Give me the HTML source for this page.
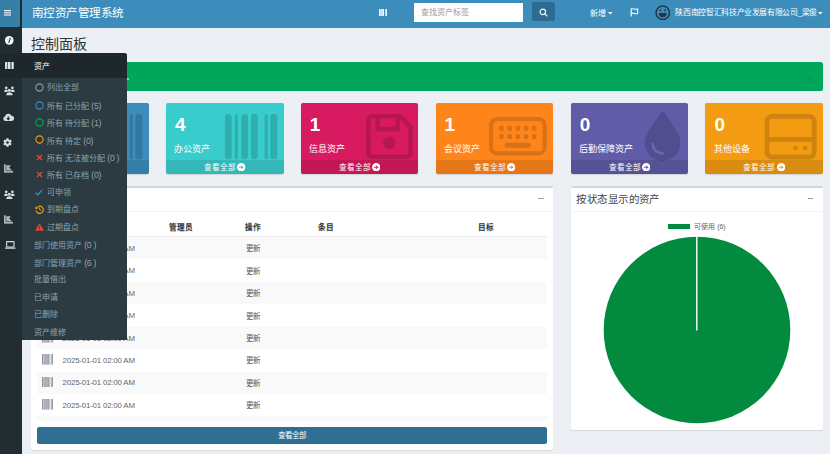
<!DOCTYPE html>
<html lang="zh-CN"><head><meta charset="utf-8">
<style>
*{box-sizing:border-box;margin:0;padding:0}
html,body{width:830px;height:454px;overflow:hidden;background:#ecf0f5;font-family:"Liberation Sans",sans-serif;position:relative}
.a{position:absolute}
#hdr{left:22px;top:0;width:808px;height:27.5px;background:#3c8dbc}
#side{left:0;top:0;width:22px;height:454px;background:#222d32}
#tog{left:0;top:0;width:19.8px;height:27px;background:#367fa9;border-bottom-right-radius:2px}
.w{color:#fff}
.box{top:103.2px;width:117.6px;height:71.3px;box-shadow:0 .5px 1px rgba(0,0,0,.12);border-radius:2px;color:#fff;overflow:hidden}
.box .num{position:absolute;left:9px;top:10.3px;font-weight:bold;font-size:19px;line-height:24px}
.box .lbl{position:absolute;left:8.4px;top:39.6px;font-size:9px;line-height:12px;white-space:nowrap}
.box .ft{position:absolute;left:0;right:0;bottom:0;height:14.4px;background:rgba(0,0,0,.1);text-align:center;font-size:7.6px;line-height:15.9px}
.box svg.ic{position:absolute}
.panel{background:#fff;border-top:2.5px solid #d2d6de;border-radius:2px;box-shadow:0 1px 1px rgba(0,0,0,.1)}
.row{left:37px;width:510.4px;height:22.4px}
.row.s{background:#f9f9f9}
.fly{left:22px;top:52.5px;width:104.6px;height:287.2px;background:#2c3b41;border-top-right-radius:3px}
.fh{left:22px;top:52.5px;width:104.6px;height:25.2px;background:#1e282c;border-top-right-radius:3px}
.it{position:absolute;left:34px;font-size:8px;line-height:12.5px;color:#8aa4af;white-space:nowrap}
.it.ic{left:46.8px}
.p{font-size:8.8px;letter-spacing:-0.3px}
</style></head><body>

<div id="side" class="a"></div>
<div id="tog" class="a"></div>
<div id="hdr" class="a"></div>
<!-- hamburger -->
<svg class="a" style="left:3.7px;top:10.3px" width="7.6" height="5.6" viewBox="0 0 7.6 5.6"><rect x="0" y="0" width="7.5" height="1.15" fill="#f4f8fb"/><rect x="0" y="2.2" width="7.5" height="1.15" fill="#f4f8fb"/><rect x="0" y="4.4" width="7.5" height="1.15" fill="#f4f8fb"/></svg>
<div class="a w" style="left:31.5px;top:4px;font-size:11.6px;letter-spacing:-0.45px;line-height:18px;white-space:nowrap">南控资产管理系统</div>
<!-- header barcode -->
<svg class="a" style="left:378.9px;top:9px" width="8.3" height="7" viewBox="0 0 8.3 7"><rect x="0" y="0" width="1.6" height="7" fill="#f0fbfb"/><rect x="1.6" y="0" width="1.7" height="7" fill="#e4dcf4"/><rect x="3.3" y="0" width="1.7" height="7" fill="#f0faf4"/><rect x="6.2" y="0" width="2" height="7" fill="#ececf6"/></svg>
<div class="a" style="left:413.5px;top:2.6px;width:109px;height:19.2px;background:#fff"></div>
<div class="a" style="left:421px;top:7.1px;font-size:8px;line-height:11px;color:#999;white-space:nowrap">查找资产标签</div>
<div class="a" style="left:532px;top:2.1px;width:23.1px;height:19.4px;background:#2d6b91;border-radius:2px"></div>
<svg class="a" style="left:538.8px;top:7.8px" width="9" height="9" viewBox="0 0 9 9"><circle cx="3.8" cy="3.8" r="2.75" fill="none" stroke="#eef4f8" stroke-width="1.15"/><line x1="5.8" y1="5.8" x2="7.9" y2="7.9" stroke="#eef4f8" stroke-width="1.3" stroke-linecap="round"/></svg>
<div class="a w" style="left:589.5px;top:7.6px;font-size:8px;line-height:11px;white-space:nowrap">新增</div>
<svg class="a" style="left:608px;top:11.8px" width="5" height="3" viewBox="0 0 5 3"><path d="M0 0H4.6L2.3 2.6Z" fill="#fff"/></svg>
<svg class="a" style="left:629.5px;top:8.3px" width="10" height="9.5" viewBox="0 0 10 9.5"><path d="M1.2 0.5V8.5" fill="none" stroke="#fff" stroke-width="1.1"/><path d="M1.2 1.1Q2.9 0.3 4.4 1T7.6 1V5.5Q6 6.2 4.4 5.5T1.2 5.5" fill="none" stroke="#f4f6fb" stroke-width="1.05"/></svg>
<svg class="a" style="left:655px;top:4.8px" width="15.5" height="15.5" viewBox="0 0 16 16"><circle cx="8" cy="8" r="6.9" fill="none" stroke="#263545" stroke-width="1.5"/><ellipse cx="5.6" cy="5.6" rx="0.9" ry="1.2" fill="#263545"/><ellipse cx="10.4" cy="5.6" rx="0.9" ry="1.2" fill="#263545"/><path d="M3.8 8.2H12.2C12.2 11 10.3 12.6 8 12.6C5.7 12.6 3.8 11 3.8 8.2Z" fill="#263545"/></svg>
<div class="a w" style="left:675.4px;top:7px;font-size:7.9px;letter-spacing:-0.36px;line-height:11px;white-space:nowrap">陕西南控智汇科技产业发展有限公司_梁俊</div>
<svg class="a" style="left:818px;top:11.8px" width="5" height="3" viewBox="0 0 5 3"><path d="M0 0H4.6L2.3 2.6Z" fill="#fff"/></svg>

<div class="a" style="left:31px;top:33.6px;font-size:14px;line-height:20px;color:#333;white-space:nowrap">控制面板</div>

<div class="a" style="left:31px;top:62.2px;width:792px;height:29.3px;background:#00a65a;border-radius:2.5px"></div>
<svg class="a" style="left:806.5px;top:76.3px" width="6" height="6" viewBox="0 0 6 6"><path d="M0.4 0.4L5.6 5.6M5.6 0.4L0.4 5.6" stroke="#0b8a50" stroke-width="0.95"/></svg>
<div class="a" style="left:126.8px;top:77.5px;width:2.5px;height:2.5px;background:#a8e6c6;border-radius:1px"></div>
<div class="a box" style="left:31.1px;background:#3c8dbc"><svg class="ic" style="left:59.2px;top:10.5px" width="53" height="46" viewBox="0 0 53 46"><g fill="#000" opacity=".15"><rect x="0" y="0" width="6.7" height="45.3" rx="3"/><rect x="9.9" y="0" width="2.9" height="45.3" rx="1.4"/><rect x="16.4" y="0" width="6.6" height="45.3" rx="3"/><rect x="26.1" y="0" width="6.6" height="45.3" rx="3"/><rect x="39.6" y="0" width="3.2" height="45.3" rx="1.5"/><rect x="45.3" y="0" width="7" height="45.3" rx="3"/></g></svg><div class="num">0</div><div class="lbl">资产</div><div class="ft">查看全部 <svg style="vertical-align:-1.3px;margin-left:-1px" width="8.4" height="8.4" viewBox="0 0 8.4 8.4"><circle cx="4.2" cy="4.2" r="4.15" fill="#fff"/><path d="M1.9 4.2H4.6" stroke="#3c8dbc" stroke-width="1.1"/><path d="M4.1 2.2L6.6 4.2L4.1 6.2Z" fill="#3c8dbc"/></svg></div></div>
<div class="a box" style="left:166.1px;background:#39cccc"><svg class="ic" style="left:59.2px;top:10.5px" width="53" height="46" viewBox="0 0 53 46"><g fill="#000" opacity=".15"><rect x="0" y="0" width="6.7" height="45.3" rx="3"/><rect x="9.9" y="0" width="2.9" height="45.3" rx="1.4"/><rect x="16.4" y="0" width="6.6" height="45.3" rx="3"/><rect x="26.1" y="0" width="6.6" height="45.3" rx="3"/><rect x="39.6" y="0" width="3.2" height="45.3" rx="1.5"/><rect x="45.3" y="0" width="7" height="45.3" rx="3"/></g></svg><div class="num">4</div><div class="lbl">办公资产</div><div class="ft">查看全部 <svg style="vertical-align:-1.3px;margin-left:-1px" width="8.4" height="8.4" viewBox="0 0 8.4 8.4"><circle cx="4.2" cy="4.2" r="4.15" fill="#fff"/><path d="M1.9 4.2H4.6" stroke="#39cccc" stroke-width="1.1"/><path d="M4.1 2.2L6.6 4.2L4.1 6.2Z" fill="#39cccc"/></svg></div></div>
<div class="a box" style="left:300.8px;background:#d81b60"><svg class="ic" style="left:65.6px;top:10.7px" width="47" height="45" viewBox="0 0 47 45"><g opacity=".15"><g fill="none" stroke="#000" stroke-width="4.6"><path d="M6.5 2.3H34L44.7 13V38.5A4 4 0 0 1 40.5 42.7H6.5A4.2 4.2 0 0 1 2.3 38.5V6.5A4.2 4.2 0 0 1 6.5 2.3Z"/><path d="M11.8 2.3V15.2H31.6V2.3"/></g><circle cx="23.3" cy="28.8" r="6.3" fill="#000"/></g></svg><div class="num">1</div><div class="lbl">信息资产</div><div class="ft">查看全部 <svg style="vertical-align:-1.3px;margin-left:-1px" width="8.4" height="8.4" viewBox="0 0 8.4 8.4"><circle cx="4.2" cy="4.2" r="4.15" fill="#fff"/><path d="M1.9 4.2H4.6" stroke="#d81b60" stroke-width="1.1"/><path d="M4.1 2.2L6.6 4.2L4.1 6.2Z" fill="#d81b60"/></svg></div></div>
<div class="a box" style="left:435.5px;background:#ff851b"><svg class="ic" style="left:53.7px;top:14px" width="58" height="39" viewBox="0 0 58 39"><g opacity=".15"><rect x="2.1" y="2.1" width="53.5" height="34.3" rx="6" fill="none" stroke="#000" stroke-width="4.2"/><g fill="#000"><rect x="10.1" y="8.8" width="4.6" height="4.9" rx="1.3"/><rect x="18.3" y="8.8" width="4.6" height="4.9" rx="1.3"/><rect x="26.5" y="8.8" width="4.6" height="4.9" rx="1.3"/><rect x="34.7" y="8.8" width="4.6" height="4.9" rx="1.3"/><rect x="42.9" y="8.8" width="4.6" height="4.9" rx="1.3"/><rect x="10.1" y="17" width="4.6" height="4.9" rx="1.3"/><rect x="18.3" y="17" width="4.6" height="4.9" rx="1.3"/><rect x="26.5" y="17" width="4.6" height="4.9" rx="1.3"/><rect x="34.7" y="17" width="4.6" height="4.9" rx="1.3"/><rect x="42.9" y="17" width="4.6" height="4.9" rx="1.3"/><rect x="15.6" y="25.8" width="26.2" height="5" rx="2.5"/></g></g></svg><div class="num">1</div><div class="lbl">会议资产</div><div class="ft">查看全部 <svg style="vertical-align:-1.3px;margin-left:-1px" width="8.4" height="8.4" viewBox="0 0 8.4 8.4"><circle cx="4.2" cy="4.2" r="4.15" fill="#fff"/><path d="M1.9 4.2H4.6" stroke="#ff851b" stroke-width="1.1"/><path d="M4.1 2.2L6.6 4.2L4.1 6.2Z" fill="#ff851b"/></svg></div></div>
<div class="a box" style="left:570.7px;background:#605ca8"><svg class="ic" style="left:73.3px;top:7.4px" width="38" height="52" viewBox="0 0 38 52"><path d="M16.6 1.8Q18.6 -0.6 20.6 1.8C25.5 10 36.5 22 36.5 32A17.9 17.9 0 0 1 0.7 32C0.7 22 11.7 10 16.6 1.8Z" fill="#000" opacity=".15"/><path d="M8.6 32.6Q9 41.6 18.8 42.4" fill="none" stroke="#6a66b2" stroke-width="2.6" stroke-linecap="round"/></svg><div class="num">0</div><div class="lbl">后勤保障资产</div><div class="ft">查看全部 <svg style="vertical-align:-1.3px;margin-left:-1px" width="8.4" height="8.4" viewBox="0 0 8.4 8.4"><circle cx="4.2" cy="4.2" r="4.15" fill="#fff"/><path d="M1.9 4.2H4.6" stroke="#605ca8" stroke-width="1.1"/><path d="M4.1 2.2L6.6 4.2L4.1 6.2Z" fill="#605ca8"/></svg></div></div>
<div class="a box" style="left:705.4px;background:#f39c12"><svg class="ic" style="left:58.9px;top:10.7px" width="54" height="46" viewBox="0 0 54 46"><g opacity=".15"><g fill="none" stroke="#000" stroke-width="4.8"><rect x="3" y="2.4" width="47.2" height="40.6" rx="5"/><line x1="3" y1="25.3" x2="50.2" y2="25.3"/></g><g fill="#000"><circle cx="31.4" cy="34.1" r="2.4"/><circle cx="41.1" cy="34.1" r="2.4"/></g></g></svg><div class="num">0</div><div class="lbl">其他设备</div><div class="ft">查看全部 <svg style="vertical-align:-1.3px;margin-left:-1px" width="8.4" height="8.4" viewBox="0 0 8.4 8.4"><circle cx="4.2" cy="4.2" r="4.15" fill="#fff"/><path d="M1.9 4.2H4.6" stroke="#f39c12" stroke-width="1.1"/><path d="M4.1 2.2L6.6 4.2L4.1 6.2Z" fill="#f39c12"/></svg></div></div>
<div class="a panel" style="left:31.3px;top:185.8px;width:521.7px;height:264.2px"></div>
<div class="a" style="left:31.3px;top:210.8px;width:521.7px;height:1px;background:#f4f4f4"></div>
<div class="a" style="left:537.8px;top:198px;width:6px;height:1px;background:#97a0b3"></div>
<div class="a" style="left:37px;top:236.2px;width:510.4px;height:1.4px;background:#ebebeb"></div>
<div class="a" style="left:169px;top:221.5px;font-size:7.6px;line-height:11px;font-weight:bold;color:#333;white-space:nowrap">管理员</div>
<div class="a" style="left:245.3px;top:221.5px;font-size:7.6px;line-height:11px;font-weight:bold;color:#333;white-space:nowrap">操作</div>
<div class="a" style="left:317.5px;top:221.5px;font-size:7.6px;line-height:11px;font-weight:bold;color:#333;white-space:nowrap">条目</div>
<div class="a" style="left:477.7px;top:221.5px;font-size:7.6px;line-height:11px;font-weight:bold;color:#333;white-space:nowrap">目标</div>
<div class="a row s" style="top:237.1px"></div>
<svg class="a" style="left:41.5px;top:242.4px" width="11.7" height="10.6" viewBox="0 0 11.7 10.6"><rect x="0" y="0" width="1.5" height="10.6" fill="#8d959c"/><rect x="1.9" y="0" width="4.3" height="10.6" fill="#abb1b6"/><rect x="6.2" y="0" width="1.3" height="10.6" fill="#8d959c"/><rect x="8.6" y="0" width="1.5" height="10.6" fill="#b5bbbf"/><rect x="10.1" y="0" width="1.5" height="10.6" fill="#8d959c"/></svg><div class="a" style="left:62.6px;top:243.9px;font-size:7.8px;letter-spacing:-0.15px;line-height:10px;color:#666;white-space:nowrap">2025-01-01 02:00 AM</div>
<div class="a" style="left:245.5px;top:244.3px;font-size:7.5px;line-height:10px;color:#555;white-space:nowrap">更新</div>
<div class="a row" style="top:259.5px"></div>
<svg class="a" style="left:41.5px;top:264.8px" width="11.7" height="10.6" viewBox="0 0 11.7 10.6"><rect x="0" y="0" width="1.5" height="10.6" fill="#8d959c"/><rect x="1.9" y="0" width="4.3" height="10.6" fill="#abb1b6"/><rect x="6.2" y="0" width="1.3" height="10.6" fill="#8d959c"/><rect x="8.6" y="0" width="1.5" height="10.6" fill="#b5bbbf"/><rect x="10.1" y="0" width="1.5" height="10.6" fill="#8d959c"/></svg><div class="a" style="left:62.6px;top:266.3px;font-size:7.8px;letter-spacing:-0.15px;line-height:10px;color:#666;white-space:nowrap">2025-01-01 02:00 AM</div>
<div class="a" style="left:245.5px;top:266.7px;font-size:7.5px;line-height:10px;color:#555;white-space:nowrap">更新</div>
<div class="a row s" style="top:281.9px"></div>
<svg class="a" style="left:41.5px;top:287.2px" width="11.7" height="10.6" viewBox="0 0 11.7 10.6"><rect x="0" y="0" width="1.5" height="10.6" fill="#8d959c"/><rect x="1.9" y="0" width="4.3" height="10.6" fill="#abb1b6"/><rect x="6.2" y="0" width="1.3" height="10.6" fill="#8d959c"/><rect x="8.6" y="0" width="1.5" height="10.6" fill="#b5bbbf"/><rect x="10.1" y="0" width="1.5" height="10.6" fill="#8d959c"/></svg><div class="a" style="left:62.6px;top:288.7px;font-size:7.8px;letter-spacing:-0.15px;line-height:10px;color:#666;white-space:nowrap">2025-01-01 02:00 AM</div>
<div class="a" style="left:245.5px;top:289.1px;font-size:7.5px;line-height:10px;color:#555;white-space:nowrap">更新</div>
<div class="a row" style="top:304.3px"></div>
<svg class="a" style="left:41.5px;top:309.6px" width="11.7" height="10.6" viewBox="0 0 11.7 10.6"><rect x="0" y="0" width="1.5" height="10.6" fill="#8d959c"/><rect x="1.9" y="0" width="4.3" height="10.6" fill="#abb1b6"/><rect x="6.2" y="0" width="1.3" height="10.6" fill="#8d959c"/><rect x="8.6" y="0" width="1.5" height="10.6" fill="#b5bbbf"/><rect x="10.1" y="0" width="1.5" height="10.6" fill="#8d959c"/></svg><div class="a" style="left:62.6px;top:311.1px;font-size:7.8px;letter-spacing:-0.15px;line-height:10px;color:#666;white-space:nowrap">2025-01-01 02:00 AM</div>
<div class="a" style="left:245.5px;top:311.5px;font-size:7.5px;line-height:10px;color:#555;white-space:nowrap">更新</div>
<div class="a row s" style="top:326.7px"></div>
<svg class="a" style="left:41.5px;top:332.0px" width="11.7" height="10.6" viewBox="0 0 11.7 10.6"><rect x="0" y="0" width="1.5" height="10.6" fill="#8d959c"/><rect x="1.9" y="0" width="4.3" height="10.6" fill="#abb1b6"/><rect x="6.2" y="0" width="1.3" height="10.6" fill="#8d959c"/><rect x="8.6" y="0" width="1.5" height="10.6" fill="#b5bbbf"/><rect x="10.1" y="0" width="1.5" height="10.6" fill="#8d959c"/></svg><div class="a" style="left:62.6px;top:333.5px;font-size:7.8px;letter-spacing:-0.15px;line-height:10px;color:#666;white-space:nowrap">2025-01-01 02:00 AM</div>
<div class="a" style="left:245.5px;top:333.9px;font-size:7.5px;line-height:10px;color:#555;white-space:nowrap">更新</div>
<div class="a row" style="top:349.1px"></div>
<svg class="a" style="left:41.5px;top:354.4px" width="11.7" height="10.6" viewBox="0 0 11.7 10.6"><rect x="0" y="0" width="1.5" height="10.6" fill="#8d959c"/><rect x="1.9" y="0" width="4.3" height="10.6" fill="#abb1b6"/><rect x="6.2" y="0" width="1.3" height="10.6" fill="#8d959c"/><rect x="8.6" y="0" width="1.5" height="10.6" fill="#b5bbbf"/><rect x="10.1" y="0" width="1.5" height="10.6" fill="#8d959c"/></svg><div class="a" style="left:62.6px;top:355.9px;font-size:7.8px;letter-spacing:-0.15px;line-height:10px;color:#666;white-space:nowrap">2025-01-01 02:00 AM</div>
<div class="a" style="left:245.5px;top:356.3px;font-size:7.5px;line-height:10px;color:#555;white-space:nowrap">更新</div>
<div class="a row s" style="top:371.5px"></div>
<svg class="a" style="left:41.5px;top:376.8px" width="11.7" height="10.6" viewBox="0 0 11.7 10.6"><rect x="0" y="0" width="1.5" height="10.6" fill="#8d959c"/><rect x="1.9" y="0" width="4.3" height="10.6" fill="#abb1b6"/><rect x="6.2" y="0" width="1.3" height="10.6" fill="#8d959c"/><rect x="8.6" y="0" width="1.5" height="10.6" fill="#b5bbbf"/><rect x="10.1" y="0" width="1.5" height="10.6" fill="#8d959c"/></svg><div class="a" style="left:62.6px;top:378.3px;font-size:7.8px;letter-spacing:-0.15px;line-height:10px;color:#666;white-space:nowrap">2025-01-01 02:00 AM</div>
<div class="a" style="left:245.5px;top:378.7px;font-size:7.5px;line-height:10px;color:#555;white-space:nowrap">更新</div>
<div class="a row" style="top:393.9px"></div>
<svg class="a" style="left:41.5px;top:399.2px" width="11.7" height="10.6" viewBox="0 0 11.7 10.6"><rect x="0" y="0" width="1.5" height="10.6" fill="#8d959c"/><rect x="1.9" y="0" width="4.3" height="10.6" fill="#abb1b6"/><rect x="6.2" y="0" width="1.3" height="10.6" fill="#8d959c"/><rect x="8.6" y="0" width="1.5" height="10.6" fill="#b5bbbf"/><rect x="10.1" y="0" width="1.5" height="10.6" fill="#8d959c"/></svg><div class="a" style="left:62.6px;top:400.7px;font-size:7.8px;letter-spacing:-0.15px;line-height:10px;color:#666;white-space:nowrap">2025-01-01 02:00 AM</div>
<div class="a" style="left:245.5px;top:401.1px;font-size:7.5px;line-height:10px;color:#555;white-space:nowrap">更新</div>

<div class="a" style="left:37px;top:416px;width:510.4px;height:5.3px;background:#f9f9f9"></div>
<div class="a" style="left:37px;top:427px;width:510.4px;height:16.6px;background:#2f6f94;border-radius:2px;color:#fff;text-align:center;font-size:7.5px;line-height:18.4px">查看全部</div>

<div class="a panel" style="left:570.8px;top:185.8px;width:252px;height:244.7px"></div>
<div class="a" style="left:570.8px;top:210.8px;width:252px;height:1px;background:#f4f4f4"></div>
<div class="a" style="left:576.3px;top:191.1px;font-size:10.5px;letter-spacing:0.45px;line-height:16px;color:#444;white-space:nowrap">按状态显示的资产</div>
<div class="a" style="left:807.8px;top:198px;width:5.5px;height:1px;background:#97a0b3"></div>
<div class="a" style="left:668.2px;top:223.9px;width:22px;height:5.6px;background:#028a3e"></div>
<div class="a" style="left:694.2px;top:221.5px;font-size:7px;line-height:10px;color:#666;white-space:nowrap">可使用 (6)</div>
<svg class="a" style="left:603px;top:236px" width="188" height="188" viewBox="0 0 188 188"><circle cx="94" cy="94" r="93.3" fill="#028a3e"/><line x1="93.8" y1="0" x2="93.8" y2="94.5" stroke="#fff" stroke-width="1.4"/></svg>

<div class="a" style="left:0;top:52.5px;width:22px;height:25.2px;background:#1e282c"></div>
<!-- dashboard -->
<svg class="a" style="left:4.6px;top:35.5px" width="9" height="9" viewBox="0 0 9 9"><circle cx="4.25" cy="4.35" r="4.3" fill="#f8fbff"/><path d="M1.6 4.2A2.7 2.7 0 0 1 6.9 4.2" fill="none" stroke="#9aa6ad" stroke-width=".7" stroke-dasharray=".8 .9"/><path d="M3.9 6.4L5.3 2.2" stroke="#1e282c" stroke-width="1.1" stroke-linecap="round"/></svg>
<!-- barcode -->
<svg class="a" style="left:4.5px;top:62px" width="9" height="7.3" viewBox="0 0 9 7.3"><rect x="0.1" y="0" width="1.8" height="7.3" fill="#f2e6ea"/><rect x="2.6" y="0" width="2.4" height="7.3" fill="#d6ecf2"/><rect x="5.3" y="0" width="0.9" height="7.3" fill="#8a9aa8"/><rect x="6.5" y="0" width="2.2" height="7.3" fill="#e2f2d8"/></svg>
<svg class="a" style="left:3.9px;top:86.3px" width="11" height="9.5" viewBox="0 0 11 9.5"><g fill="#d4dde2"><circle cx="2.2" cy="1.8" r="1.35"/><circle cx="8.4" cy="1.8" r="1.35"/><circle cx="5.3" cy="4.2" r="1.5"/><path d="M0.2 5.9C0.2 4.3 1.1 3.5 2.2 3.5C2.9 3.5 3.4 3.8 3.7 4.2C3.5 4.6 3.5 5.3 3.8 5.9Z"/><path d="M10.6 5.9C10.6 4.3 9.7 3.5 8.6 3.5C7.9 3.5 7.4 3.8 7.1 4.2C7.3 4.6 7.3 5.3 7 5.9Z"/><path d="M2.2 9.2C2.2 7.3 3.5 6.3 5.4 6.3C7.3 6.3 8.6 7.3 8.6 9.2Z"/></g></svg><svg class="a" style="left:3.4px;top:112.6px" width="11" height="8.2" viewBox="0 0 11 8.2"><path d="M2.4 8A2.3 2.3 0 0 1 2 3.5A3.4 3.4 0 0 1 8.4 2.8A2.6 2.6 0 0 1 8.6 8Z" fill="#d4dde2"/><path d="M5.3 3.3V6.6M3.9 5.2L5.3 6.7L6.7 5.2" fill="none" stroke="#222d32" stroke-width="1.1"/></svg><svg class="a" style="left:3.3px;top:137.9px" width="9" height="9" viewBox="0 0 9 9"><path d="M3.26 1.44 L3.44 0.23 L5.56 0.23 L5.74 1.44 L6.53 1.90 L7.67 1.44 L8.73 3.29 L7.77 4.04 L7.77 4.96 L8.73 5.71 L7.67 7.56 L6.53 7.10 L5.74 7.56 L5.56 8.77 L3.44 8.77 L3.26 7.56 L2.47 7.10 L1.33 7.56 L0.27 5.71 L1.23 4.96 L1.23 4.04 L0.27 3.29 L1.33 1.44 L2.47 1.90Z" fill="#d4dde2"/><circle cx="4.5" cy="4.5" r="1.3" fill="#222d32"/></svg><svg class="a" style="left:4.4px;top:163.5px" width="9.5" height="9" viewBox="0 0 9.5 9"><path d="M0.85 0.3V7.95H9" fill="none" stroke="#d4dde2" stroke-width="1.3"/><path d="M2.2 1.2H6.8L5.2 3.8L8.3 6.4H2.2Z" fill="#a9b6bc"/></svg><svg class="a" style="left:3.9px;top:189.8px" width="11" height="9.5" viewBox="0 0 11 9.5"><g fill="#d4dde2"><circle cx="2.2" cy="1.8" r="1.35"/><circle cx="8.4" cy="1.8" r="1.35"/><circle cx="5.3" cy="4.2" r="1.5"/><path d="M0.2 5.9C0.2 4.3 1.1 3.5 2.2 3.5C2.9 3.5 3.4 3.8 3.7 4.2C3.5 4.6 3.5 5.3 3.8 5.9Z"/><path d="M10.6 5.9C10.6 4.3 9.7 3.5 8.6 3.5C7.9 3.5 7.4 3.8 7.1 4.2C7.3 4.6 7.3 5.3 7 5.9Z"/><path d="M2.2 9.2C2.2 7.3 3.5 6.3 5.4 6.3C7.3 6.3 8.6 7.3 8.6 9.2Z"/></g></svg><svg class="a" style="left:4.4px;top:214.5px" width="9.5" height="9" viewBox="0 0 9.5 9"><path d="M0.85 0.3V7.95H9" fill="none" stroke="#d4dde2" stroke-width="1.3"/><path d="M2.2 1.2H6.8L5.2 3.8L8.3 6.4H2.2Z" fill="#a9b6bc"/></svg><svg class="a" style="left:4.6px;top:240.8px" width="11" height="8" viewBox="0 0 11 8"><rect x="1.6" y="0.6" width="7.4" height="5.4" rx=".5" fill="none" stroke="#d4dde2" stroke-width="1.1"/><rect x="0" y="6.4" width="10.6" height="1.3" rx=".4" fill="#d4dde2"/></svg>
<div class="a fly"></div>
<div class="a fh"></div>
<div class="a" style="left:34.3px;top:60.5px;font-size:8px;line-height:11px;color:#fff;white-space:nowrap">资产</div>
<svg class="a" style="left:34.6px;top:83.1px" width="9" height="9" viewBox="0 0 9 9"><circle cx="4.5" cy="4.5" r="3.6" fill="none" stroke="#8aa4af" stroke-width="1.1"/></svg><div class="it ic" style="top:82.3px">列出全部</div>
<svg class="a" style="left:34.6px;top:100.5px" width="9" height="9" viewBox="0 0 9 9"><circle cx="4.5" cy="4.5" r="3.6" fill="none" stroke="#3c8dbc" stroke-width="1.1"/></svg><div class="it ic" style="top:99.7px">所有 已分配 <span class="p">(5)</span></div>
<svg class="a" style="left:34.6px;top:117.9px" width="9" height="9" viewBox="0 0 9 9"><circle cx="4.5" cy="4.5" r="3.6" fill="none" stroke="#00a65a" stroke-width="1.1"/></svg><div class="it ic" style="top:117.1px">所有 待分配 <span class="p">(1)</span></div>
<svg class="a" style="left:34.6px;top:135.3px" width="9" height="9" viewBox="0 0 9 9"><circle cx="4.5" cy="4.5" r="3.6" fill="none" stroke="#f39c12" stroke-width="1.1"/></svg><div class="it ic" style="top:134.5px">所有 待定 <span class="p">(0)</span></div>
<svg class="a" style="left:35.5px;top:153.8px" width="7" height="7" viewBox="0 0 7 7"><path d="M1 1L6 6M6 1L1 6" stroke="#dd4b39" stroke-width="1.3"/></svg><div class="it ic" style="top:152.0px">所有 无法被分配 <span class="p">(0 )</span></div>
<svg class="a" style="left:35.5px;top:171.2px" width="7" height="7" viewBox="0 0 7 7"><path d="M1 1L6 6M6 1L1 6" stroke="#dd4b39" stroke-width="1.3"/></svg><div class="it ic" style="top:169.4px">所有 已存档 <span class="p">(0)</span></div>
<svg class="a" style="left:35.2px;top:188.5px" width="8" height="7" viewBox="0 0 8 7"><path d="M0.7 3.8L2.8 5.8L7.3 0.9" fill="none" stroke="#3c8dbc" stroke-width="1.3"/></svg><div class="it ic" style="top:186.7px">可申领</div>
<svg class="a" style="left:34.8px;top:205.1px" width="9" height="9" viewBox="0 0 9 9"><path d="M1.6 3A3.6 3.6 0 1 1 1.2 5.6" fill="none" stroke="#f39c12" stroke-width="1.2"/><path d="M0.2 1.4L0.6 4.2L3 3.4Z" fill="#f39c12"/><path d="M4.6 2.5V4.7L6 5.6" fill="none" stroke="#f39c12" stroke-width="1"/></svg><div class="it ic" style="top:204.1px">到期盘点</div>
<svg class="a" style="left:34.6px;top:222.6px" width="9" height="8" viewBox="0 0 9 8"><path d="M4.5 0.2L8.9 7.8H0.1Z" fill="#dd4b39"/><rect x="4.05" y="2.8" width="0.9" height="2.6" fill="#2c3b41"/><rect x="4.05" y="6" width="0.9" height="0.9" fill="#2c3b41"/></svg><div class="it ic" style="top:221.6px">过期盘点</div>
<div class="it" style="top:239.3px">部门使用资产 <span class="p">(0 )</span></div>
<div class="it" style="top:256.7px">部门管理资产 <span class="p">(6 )</span></div>
<div class="it" style="top:274.2px">批量借出</div>
<div class="it" style="top:291.7px">已申请</div>
<div class="it" style="top:309.1px">已删除</div>
<div class="it" style="top:326.6px">资产维修</div>

</body></html>
